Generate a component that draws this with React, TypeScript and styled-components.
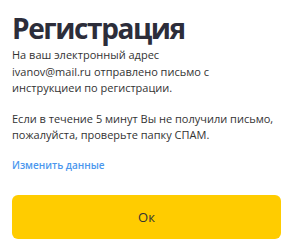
import React from 'react';
import styled, { createGlobalStyle } from 'styled-components';

const GlobalStyle = createGlobalStyle`
  html, body {
    margin: 0;
    padding: 0;
    background: #ffffff;
  }
  body {
    font-family: 'Open Sans', 'Noto Sans', sans-serif;
  }
`;

const Card = styled.div`
  width: 293px;
  height: 251px;
  box-sizing: border-box;
  padding: 10px 12px 12px 12px;
  display: flex;
  flex-direction: column;
  background: #ffffff;
`;

const Title = styled.h1`
  margin: 0;
  font-size: 28px;
  line-height: 36px;
  font-weight: 700;
  color: #2c2d3a;
  letter-spacing: -1.4px;
`;

const Paragraph = styled.p<{ $top: number }>`
  margin: ${({ $top }) => $top}px 0 0 0;
  font-size: 11px;
  line-height: 16.5px;
  color: #333333;
`;

const Link = styled.a`
  margin-top: 14px;
  font-size: 10px;
  line-height: 14px;
  font-weight: 600;
  color: #4b97ee;
  text-decoration: none;
  cursor: pointer;
`;

const Button = styled.button`
  margin-top: auto;
  height: 44px;
  width: 100%;
  border: none;
  border-radius: 6px;
  background: #ffcc00;
  color: #333333;
  font-family: 'Open Sans', 'Noto Sans', sans-serif;
  font-size: 13px;
  cursor: pointer;
`;

const App: React.FC = () => {
  return (
    <>
      <GlobalStyle />
      <Card>
        <Title>Регистрация</Title>
        <Paragraph $top={1}>
          На ваш электронный адрес
          <br />
          ivanov@mail.ru отправлено письмо с
          <br />
          инструкциеи по регистрации.
        </Paragraph>
        <Paragraph $top={14}>
          Если в течение 5 минут Вы не получили письмо,
          <br />
          пожалуйста, проверьте папку СПАМ.
        </Paragraph>
        <Link>Изменить данные</Link>
        <Button>Ок</Button>
      </Card>
    </>
  );
};

export default App;
